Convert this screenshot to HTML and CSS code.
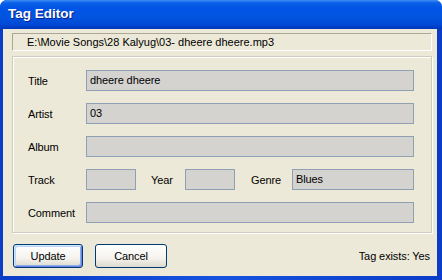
FILE: index.html
```html
<!DOCTYPE html>
<html lang="en">
<head>
  <meta charset="UTF-8" />
  <title>Tag Editor</title>
  <link rel="stylesheet" href="styles.css">
</head>
<body>
  <div class="window">
    <div class="titlebar">Tag Editor</div>
    <div class="client">
      <div class="path">E:\Movie Songs\28 Kalyug\03- dheere dheere.mp3</div>

      <div class="group">
        <div class="row">
          <label class="lbl">Title</label>
          <div class="field grow">dheere dheere</div>
        </div>
        <div class="row">
          <label class="lbl">Artist</label>
          <div class="field grow">03</div>
        </div>
        <div class="row">
          <label class="lbl">Album</label>
          <div class="field grow"></div>
        </div>
        <div class="row">
          <label class="lbl">Track</label>
          <div class="field short"></div>
          <label class="lbl-year">Year</label>
          <div class="field short"></div>
          <label class="lbl-genre">Genre</label>
          <div class="field grow">Blues</div>
        </div>
        <div class="row">
          <label class="lbl">Comment</label>
          <div class="field grow"></div>
        </div>
      </div>

      <div class="actions">
        <button class="btn default">Update</button>
        <button class="btn cancel">Cancel</button>
        <span class="status">Tag exists: Yes</span>
      </div>
    </div>
  </div>
</body>
</html>
```

FILE: styles.css
```css
body {
  margin: 0;
  font-family: "Liberation Sans", Arial, sans-serif;
  font-size: 11px;
  letter-spacing: -0.1px;
  color: #000;
}
.window {
  width: 442px;
  height: 280px;
  display: flex;
  flex-direction: column;
  background: linear-gradient(to right, #0a3cc8, #1652e0 50%, #0a3cc8);
  border-radius: 7px 7px 0 0;
  overflow: hidden;
}
.titlebar {
  height: 29px;
  flex: none;
  padding-left: 8px;
  line-height: 28px;
  color: #fff;
  font-weight: bold;
  font-size: 13.5px;
  letter-spacing: 0;
  text-shadow: 1px 1px #0a1e8c;
  background: linear-gradient(to bottom, #3d8cf5 0, #0a5fe8 3px, #0055e5 8px, #0253e0 18px, #0047d4 25px, #0036b8 29px);
}
.client {
  flex: 1;
  margin: 0 5px 4px 3px;
  background: #ece9d8;
  padding: 4px 5px 0 9px;
  display: flex;
  flex-direction: column;
}
.path {
  height: 16px;
  line-height: 16px;
  padding-left: 14px;
  letter-spacing: 0;
  border: 1px solid;
  border-color: #aca899 #fff #fff #aca899;
}
.group {
  margin-top: 5px;
  height: 177px;
  box-sizing: border-box;
  border: 1px solid #d0cdbf;
  box-shadow: inset 1px 1px #fff, 1px 1px #fff;
  padding: 13px 17px 0 15px;
  display: flex;
  flex-direction: column;
  gap: 12px;
}
.row {
  display: flex;
  align-items: center;
  height: 21px;
}
.lbl {
  width: 58px;
  flex: none;
}
.lbl-year {
  margin-left: 15px;
  width: 34px;
  flex: none;
}
.lbl-genre {
  margin-left: 16px;
  width: 41px;
  flex: none;
}
.field {
  height: 21px;
  box-sizing: border-box;
  background: #d4d3d0;
  border: 1px solid #8fa0b4;
  padding-left: 3px;
  line-height: 19px;
}
.grow {
  flex: 1;
}
.short {
  width: 50px;
  flex: none;
}
.actions {
  margin-top: 11px;
  display: flex;
  align-items: center;
  gap: 12px;
  padding-left: 1px;
  padding-right: 2px;
}
.btn {
  height: 24px;
  width: 70px;
  font-family: inherit;
  font-size: 11px;
  letter-spacing: -0.1px;
  border: 1px solid #003c74;
  border-radius: 3px;
  background: linear-gradient(to bottom, #fff, #f4f3ee 60%, #dcd8cc);
  padding: 0;
}
.btn.default {
  box-shadow: inset 1px 1px #cee7ff, inset -1px -1px #6982ee, inset 2px 2px #bcd4f6, inset -2px -2px #89ade4;
}
.btn.cancel {
  width: 72px;
}
.status {
  margin-left: auto;
}
```
